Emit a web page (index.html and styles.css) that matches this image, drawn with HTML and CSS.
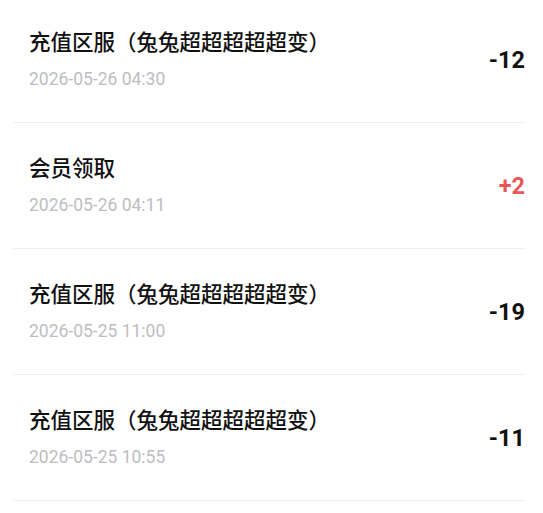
FILE: index.html
```html
<!DOCTYPE html>
<html lang="zh-CN">
<head>
    <meta charset="UTF-8">
    <meta name="viewport" content="width=device-width, initial-scale=1.0">
    <title>积分明细</title>
    <link rel="stylesheet" href="styles.css">
</head>
<body>
    <div class="record-list">
        <div class="record-item">
            <div class="record-info">
                <div class="record-title">充值区服（兔兔超超超超超变）</div>
                <div class="record-time">2026-05-26 04:30</div>
            </div>
            <div class="record-amount">-12</div>
        </div>
        <div class="record-item">
            <div class="record-info">
                <div class="record-title">会员领取</div>
                <div class="record-time">2026-05-26 04:11</div>
            </div>
            <div class="record-amount plus">+2</div>
        </div>
        <div class="record-item">
            <div class="record-info">
                <div class="record-title">充值区服（兔兔超超超超超变）</div>
                <div class="record-time">2026-05-25 11:00</div>
            </div>
            <div class="record-amount">-19</div>
        </div>
        <div class="record-item">
            <div class="record-info">
                <div class="record-title">充值区服（兔兔超超超超超变）</div>
                <div class="record-time">2026-05-25 10:55</div>
            </div>
            <div class="record-amount">-11</div>
        </div>
    </div>
</body>
</html>
```

FILE: styles.css
```css
html, body {
    margin: 0;
    padding: 0;
    background: #ffffff;
    font-family: Roboto, "Noto Sans CJK SC", sans-serif;
}
.record-list {
    margin: -3px 17px 0 13px;
}
.record-item {
    display: flex;
    align-items: center;
    justify-content: space-between;
    padding: 32px 1px 32px 16px;
    border-bottom: 1px solid #f0f0f0;
}
.record-info {
    display: flex;
    flex-direction: column;
    gap: 11px;
}
.record-title {
    font-size: 21.5px;
    line-height: 28px;
    color: #111111;
    font-weight: 500;
}
.record-time {
    font-size: 17.5px;
    line-height: 22px;
    color: #bdbdc2;
}
.record-amount {
    font-size: 23.5px;
    font-weight: bold;
    color: #111111;
}
.record-amount.plus {
    color: #e8585a;
}
```
